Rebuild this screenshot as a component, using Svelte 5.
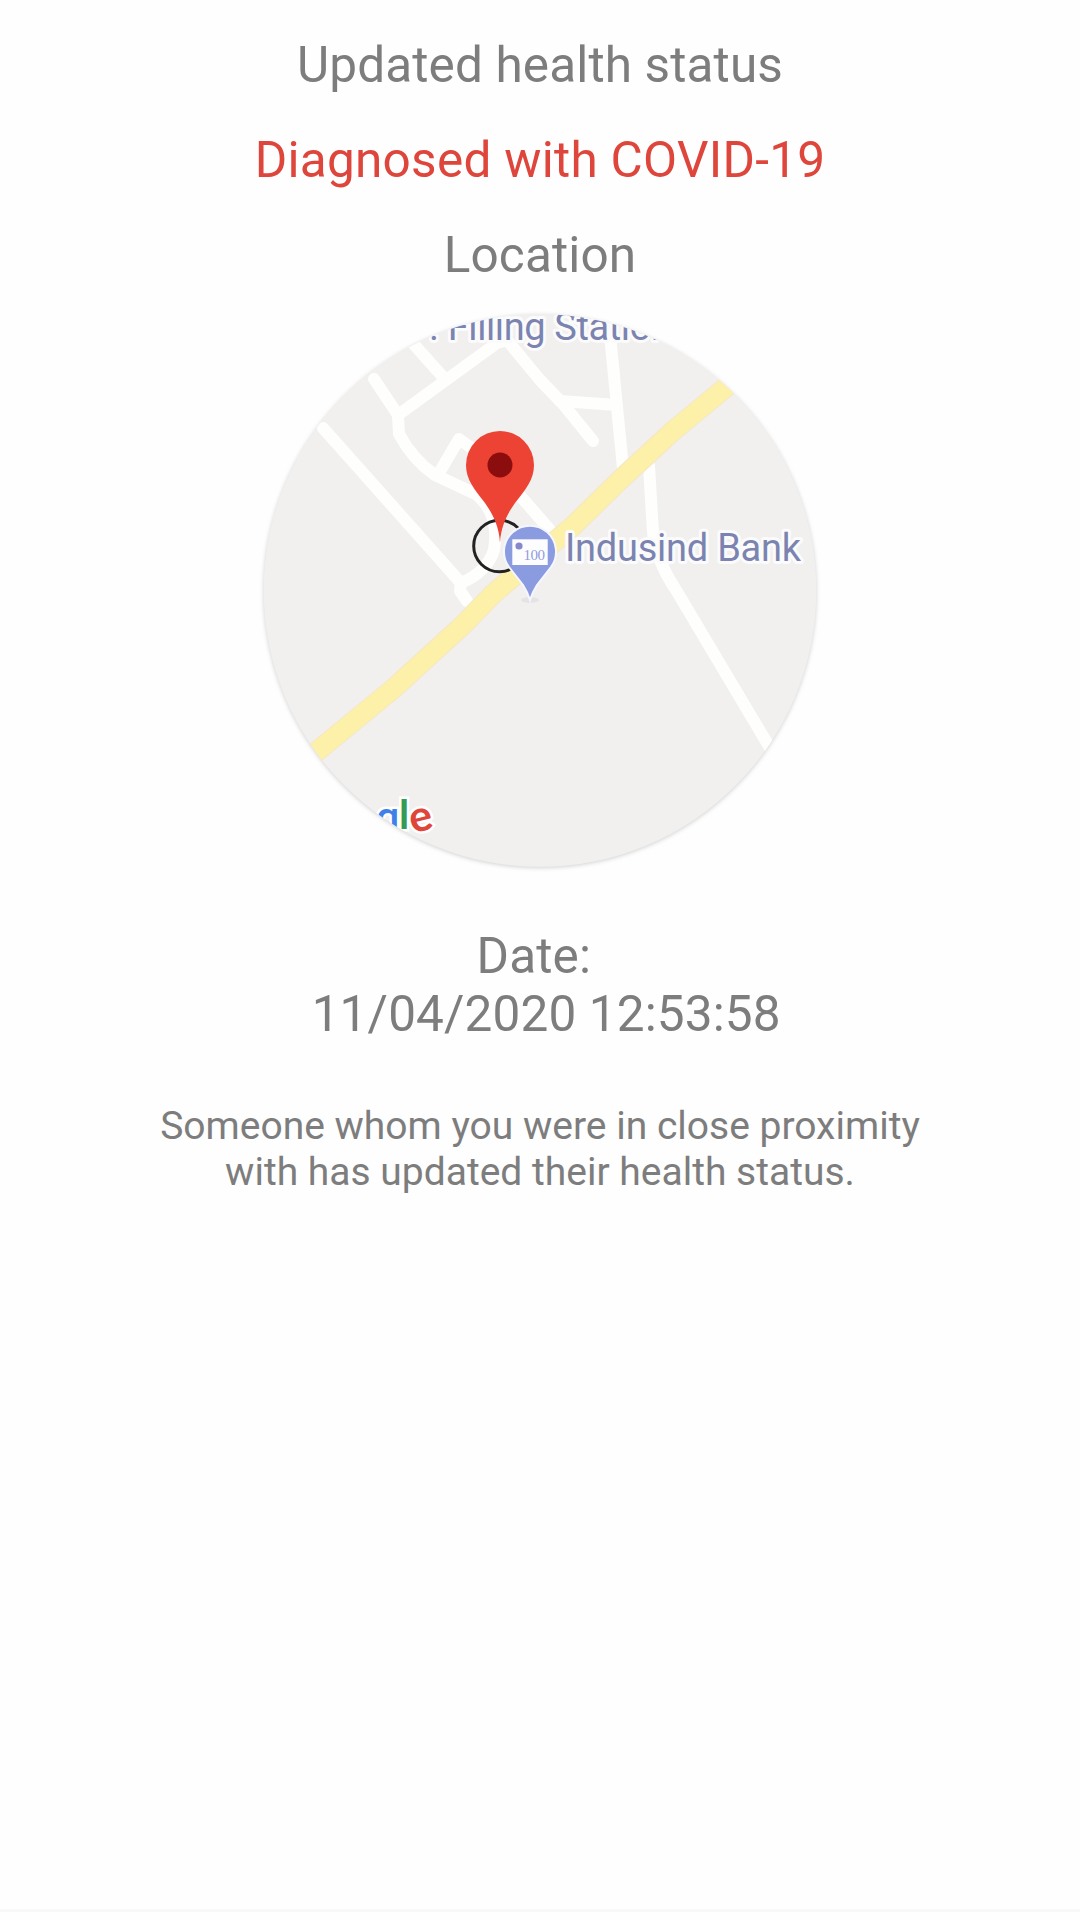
<script>
  const date = '11/04/2020 12:53:58';
</script>

<main class="screen">
  <h1 class="line title"><span>Updated health status</span></h1>
  <p class="line alert"><span>Diagnosed with COVID-19</span></p>
  <h2 class="line"><span>Location</span></h2>

  <svg class="map" viewBox="250 303 580 577" role="img" aria-label="Location map">
    <defs>
      <clipPath id="disc"><circle cx="540" cy="590.5" r="276.3" /></clipPath>
    </defs>
    <circle class="land" cx="540" cy="590.5" r="276.3" />
    <g clip-path="url(#disc)">
      <g class="road">
        <path d="M323 428L461 583L460 591L467 601M461 583Q487 572 494 550Q500 515 478 496" />
        <path d="M374 379L398 415L399 434Q413 460 435 475L480 496" />
        <path d="M439 473L459 439L484 457L523 499L550 530" />
        <path d="M410 340L443 377M398 415L497 343L507 340L540 380L563 404L593 441" />
        <path d="M560 401L617 405M610 335L618 417L623 468" />
        <path d="M649 466L653 532Q656 560 676 590L773 753" />
      </g>
      <path class="highway-edge" d="M742 374L673 431L620 480L573 526L493 594L463 625L417 667L393 689L310 757" />
      <path class="highway" d="M742 374L673 431L620 480L573 526L493 594L463 625L417 667L393 689L310 757" />
      <g class="label">
        <text x="429" y="340" textLength="243">. Filling Station</text>
        <text x="565" y="561" textLength="236">Indusind Bank</text>
      </g>
      <g class="brand">
        <text class="g" x="376" y="831">g</text>
        <text class="l" x="399" y="829">l</text>
        <text class="e" x="409.5" y="831" transform="rotate(-14 421 820)">e</text>
      </g>
    </g>
    <circle class="ring" cx="499.5" cy="546" r="25.8" />
    <path class="pin" d="M500 543C499 525 492 513 485 503C475 490 466 480 466 465A34 34 0 0 1 534 465C534 480 525 490 515 503C508 513 501 525 500 543Z" />
    <circle class="pin-dot" cx="500" cy="465" r="12.5" />
    <ellipse class="shade" cx="530" cy="600" rx="9" ry="3" />
    <path class="bank" d="M530 600Q528 593 523 585L509 567A26 26 0 1 1 551 567L537 585Q532 593 530 600Z" />
    <rect class="note" x="512.3" y="539.3" width="35.4" height="25.7" />
    <circle class="note-dot" cx="519" cy="546" r="3.6" />
    <text class="note-text" x="523.5" y="559.5" textLength="21.5">100</text>
  </svg>

  <div class="date"><span>Date:&nbsp;</span><span>&nbsp;{date}</span></div>
  <p class="message">
    <span>Someone whom you were in close proximity</span>
    <span>with has updated their health status.</span>
  </p>
  <div class="divider"></div>
</main>

<style>
  :global(body) { margin: 0; background: #fefefe; }
  .screen {
    box-sizing: border-box;
    width: 1080px;
    height: 1920px;
    padding-top: 18px;
    display: flex;
    flex-direction: column;
    align-items: center;
    background: #fefefe;
    color: #7d7d7d;
    font-family: Roboto, sans-serif;
  }
  .line { margin: 0; height: 95px; line-height: 95px; font-size: 49.5px; font-weight: 400; letter-spacing: 0.13px; white-space: nowrap; }
  .alert { color: #de453b; letter-spacing: 0.28px; }
  .map { display: block; width: 580px; height: 577px; flex: none; }
  .land { fill: #f1f0ef; filter: drop-shadow(0 1px 2px rgba(0, 0, 0, 0.18)); }
  .road { fill: none; stroke: #fefefd; stroke-width: 12; stroke-linejoin: round; stroke-linecap: round; }
  .highway-edge { fill: none; stroke: #f5e9c4; stroke-width: 21; stroke-linejoin: round; }
  .highway { fill: none; stroke: #fdf0a8; stroke-width: 18.5; stroke-linejoin: round; }
  .label text { fill: #7b84b0; font-size: 38px; stroke: #fbfbfc; stroke-width: 6px; stroke-linejoin: round; paint-order: stroke; }
  .brand text { font-family: Lato, sans-serif; font-weight: 700; stroke: #fff; stroke-width: 5px; paint-order: stroke; }
  .brand .g { fill: #4081e8; font-family: Roboto, sans-serif; font-size: 41px; font-weight: 500; }
  .brand .l { fill: #349b57; font-size: 41px; }
  .brand .e { fill: #df4539; font-size: 43px; }
  .ring { fill: none; stroke: #222; stroke-width: 3; }
  .pin { fill: #ed4335; }
  .pin-dot { fill: #8b0d0d; }
  .shade { fill: #e4e4e4; }
  .bank { fill: #8b9be0; stroke: #f6f6ff; stroke-width: 2; }
  .note { fill: #fdfdff; }
  .note-dot { fill: #8589cc; }
  .note-text { fill: #929cdc; font: 15px "Liberation Serif", serif; }
  .date { margin-top: 47px; display: flex; flex-direction: column; align-items: center; font-size: 49.5px; line-height: 58.3px; letter-spacing: 0.13px; white-space: nowrap; }
  .message { margin: 59px 0 0; display: flex; flex-direction: column; align-items: center; font-size: 39px; line-height: 46.3px; white-space: nowrap; }
  .divider { width: 100%; height: 3px; margin-top: auto; margin-bottom: 8px; background: #f8f8f8; }
</style>
